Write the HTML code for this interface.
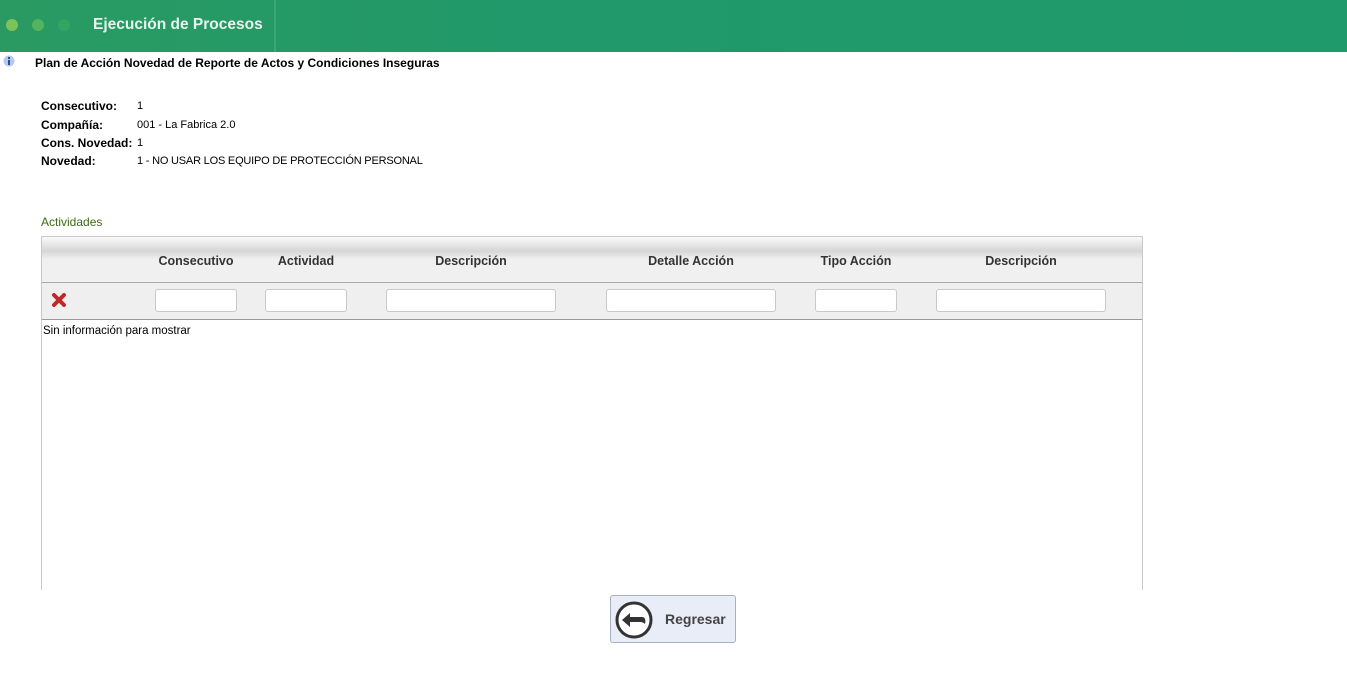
<!DOCTYPE html>
<html><head><meta charset="utf-8"><style>
*{margin:0;padding:0;box-sizing:border-box}
body{width:1347px;height:678px;background:#fff;font-family:"Liberation Sans",sans-serif;font-size:12px;color:#000;position:relative;overflow:hidden}
.hdr{position:absolute;left:0;top:0;width:1347px;height:52px;background:linear-gradient(90deg,#2a9a62 0%,#21996a 40%,#1f9a6b 100%)}
.dot{position:absolute;top:19px;width:12px;height:12px;border-radius:50%}
.sep{position:absolute;left:274px;top:0;width:2px;height:52px;background:#3aa77a}
.ttl{position:absolute;left:93px;top:16px;font-weight:bold;font-size:15.5px;color:#e8f4ee}
.abs{position:absolute;white-space:nowrap}
.b{font-weight:bold}
.v{font-size:11px}
.tbl{position:absolute;left:41px;top:236px;width:1102px;height:354px;border:1px solid #c8c8c8;border-bottom:none}
.th{position:absolute;left:0;top:0;width:1100px;height:46px;background:linear-gradient(#fafafa 0,#d6d6d6 14px,#f0f0f0 22px,#f0f0f0 100%);border-bottom:1px solid #aaa}
.fr{position:absolute;left:0;top:46px;width:1100px;height:37px;background:#efefef;border-bottom:1px solid #999}
.inp{position:absolute;top:6px;height:23px;background:#fff;border:1px solid #c9c9c9;border-radius:3px}
.hc{position:absolute;top:17px;font-weight:bold;font-size:12.5px;color:#333;transform:translateX(-50%)}
.btn{position:absolute;left:610px;top:595px;width:126px;height:48px;background:#e9edf8;border:1px solid #a9b0c0;border-radius:3px}
</style></head><body>
<div class="hdr">
<div class="dot" style="left:6px;background:#7cc25a"></div>
<div class="dot" style="left:32px;background:#55b25e"></div>
<div class="dot" style="left:58px;background:#33a563"></div>
<div class="sep"></div>
<div class="ttl">Ejecución de Procesos</div>
</div>
<svg class="abs" style="left:3px;top:55px" width="12" height="12" viewBox="0 0 12 12"><circle cx="6" cy="6" r="5.5" fill="#b8c8e8"/><rect x="5" y="2" width="2" height="2" fill="#2050a0"/><rect x="5" y="5" width="2" height="5" fill="#2050a0"/></svg>
<div class="abs b" style="left:35px;top:56px">Plan de Acción Novedad de Reporte de Actos y Condiciones Inseguras</div>
<div class="abs b" style="left:41px;top:99px">Consecutivo:</div><div class="abs v" style="left:137px;top:100px">1</div>
<div class="abs b" style="left:41px;top:118px">Compañía:</div><div class="abs v" style="left:137px;top:119px">001 - La Fabrica 2.0</div>
<div class="abs b" style="left:41px;top:136px">Cons. Novedad:</div><div class="abs v" style="left:137px;top:137px">1</div>
<div class="abs b" style="left:41px;top:154px">Novedad:</div><div class="abs v" style="left:137px;top:155px;letter-spacing:-0.2px">1 - NO USAR LOS EQUIPO DE PROTECCIÓN PERSONAL</div>
<div class="abs" style="left:41px;top:215px;color:#3d6b12">Actividades</div>
<div class="tbl">
<div class="th">
<div class="hc" style="left:154px">Consecutivo</div>
<div class="hc" style="left:264px">Actividad</div>
<div class="hc" style="left:429px">Descripción</div>
<div class="hc" style="left:649px">Detalle Acción</div>
<div class="hc" style="left:814px">Tipo Acción</div>
<div class="hc" style="left:979px">Descripción</div>
</div>
<div class="fr">
<svg style="position:absolute;left:10px;top:10px" width="14" height="14" viewBox="0 0 14 14"><path d="M2 2L12 12M12 2L2 12" stroke="#c0282a" stroke-width="4" stroke-linecap="round"/></svg>
<div class="inp" style="left:113px;width:82px"></div>
<div class="inp" style="left:223px;width:82px"></div>
<div class="inp" style="left:344px;width:170px"></div>
<div class="inp" style="left:564px;width:170px"></div>
<div class="inp" style="left:773px;width:82px"></div>
<div class="inp" style="left:894px;width:170px"></div>
</div>
<div class="abs" style="left:1px;top:88px;font-size:11.5px">Sin información para mostrar</div>
</div>
<div class="btn">
<svg style="position:absolute;left:4px;top:5px" width="38" height="38" viewBox="0 0 38 38"><circle cx="19" cy="19" r="17" fill="#fff" stroke="#333" stroke-width="3"/><path d="M7 19L15 12V16H27C30 16 31 19 30 23C28 21 26 21 24 21H15V26Z" fill="#333"/></svg>
<div class="abs b" style="left:54px;top:15px;font-size:14px;color:#444">Regresar</div>
</div>
</body></html>
